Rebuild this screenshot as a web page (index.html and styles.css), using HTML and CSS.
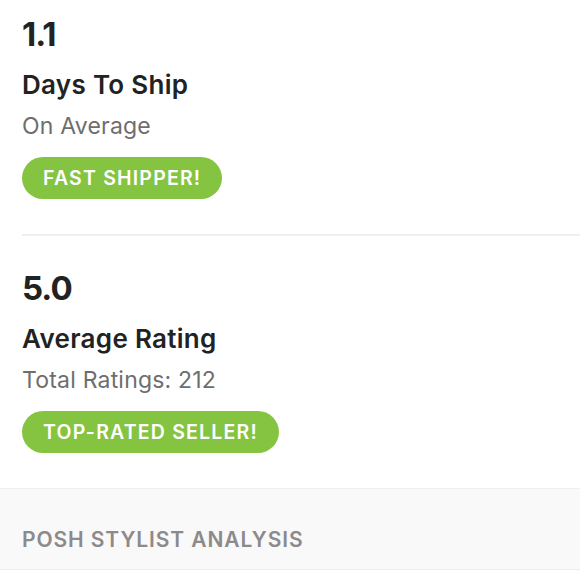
FILE: index.html
```html
<!DOCTYPE html>
<html>
<head>
<meta charset="utf-8">
<link rel="stylesheet" href="styles.css">
</head>
<body>
<div class="page">
  <section class="stat">
    <div class="value">1.1</div>
    <div class="title">Days To Ship</div>
    <div class="sub">On Average</div>
    <div class="pill">FAST SHIPPER!</div>
  </section>
  <section class="stat stat-second">
    <div class="value">5.0</div>
    <div class="title">Average Rating</div>
    <div class="sub">Total Ratings: 212</div>
    <div class="pill">TOP-RATED SELLER!</div>
  </section>
  <section class="band">
    <div class="band-title">POSH STYLIST ANALYSIS</div>
  </section>
</div>
</body>
</html>
```
FILE: styles.css
```css
html, body {
  margin: 0;
  padding: 0;
  background: #ffffff;
}
.page {
  font-family: "Inter", "Liberation Sans", sans-serif;
  color: #222222;
  width: 580px;
}
.stat {
  margin-left: 22px;
  padding-top: 14px;
  padding-bottom: 35px;
  display: flex;
  flex-direction: column;
  align-items: flex-start;
}
.stat-second {
  border-top: 2px solid #efefef;
  padding-top: 32px;
}
.value {
  font-size: 33px;
  font-weight: 700;
  line-height: 40px;
  letter-spacing: -1px;
}
.title {
  font-size: 26px;
  font-weight: 600;
  line-height: 30px;
  margin-top: 16px;
  letter-spacing: 0.3px;
}
.sub {
  font-size: 23px;
  color: #6e6e6e;
  line-height: 28px;
  margin-top: 12px;
  letter-spacing: 0.2px;
}
.pill {
  margin-top: 17px;
  height: 42px;
  line-height: 42px;
  padding: 0 21px;
  border-radius: 21px;
  background: #84c441;
  color: #ffffff;
  font-size: 19.5px;
  font-weight: 600;
  letter-spacing: 1.2px;
}
.band {
  background: #faf9f9;
  border-top: 1px solid #f0efef;
  border-bottom: 1px solid #efeeee;
  height: 80px;
  padding-left: 22px;
  display: flex;
  align-items: center;
}
.band-title {
  font-size: 21px;
  font-weight: 600;
  color: #8c8a8a;
  letter-spacing: 0.9px;
  padding-top: 20px;
}
```
